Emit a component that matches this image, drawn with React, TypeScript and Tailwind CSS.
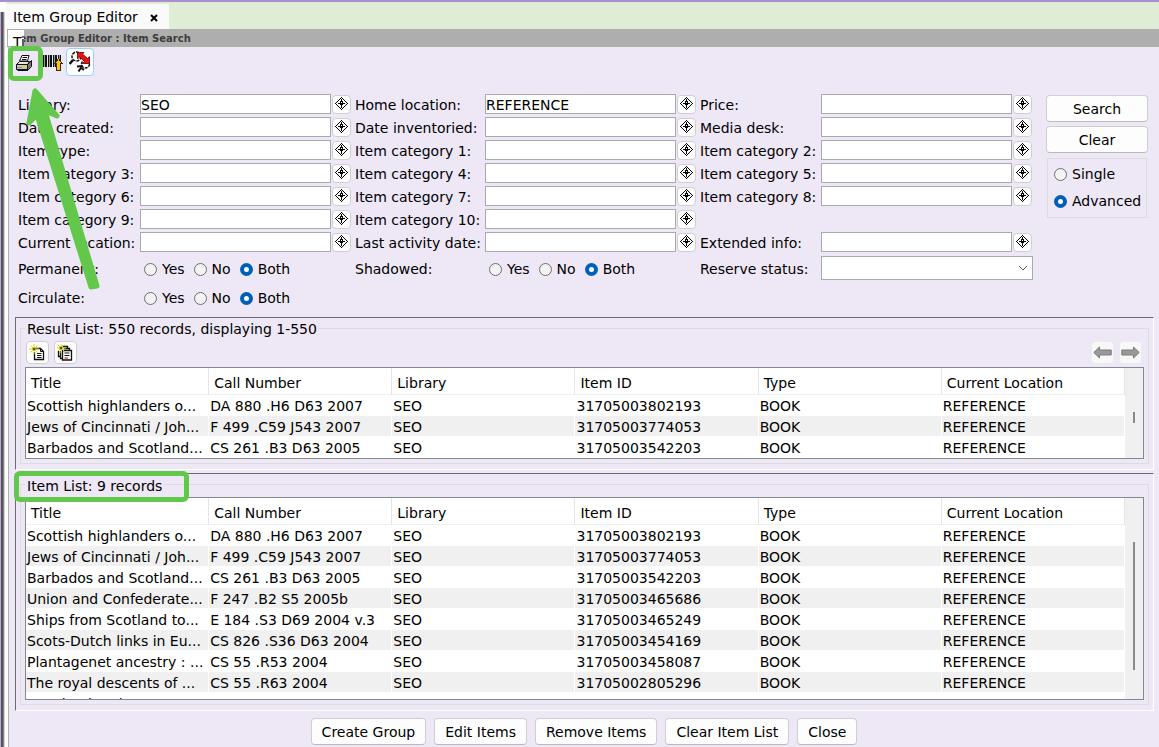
import React from 'react'

const columns = ['Title', 'Call Number', 'Library', 'Item ID', 'Type', 'Current Location']

const records = [
  ['Scottish highlanders o...', 'DA 880 .H6 D63 2007', 'SEO', '31705003802193', 'BOOK', 'REFERENCE'],
  ['Jews of Cincinnati / Joh...', 'F 499 .C59 J543 2007', 'SEO', '31705003774053', 'BOOK', 'REFERENCE'],
  ['Barbados and Scotland...', 'CS 261 .B3 D63 2005', 'SEO', '31705003542203', 'BOOK', 'REFERENCE'],
  ['Union and Confederate...', 'F 247 .B2 S5 2005b', 'SEO', '31705003465686', 'BOOK', 'REFERENCE'],
  ['Ships from Scotland to...', 'E 184 .S3 D69 2004 v.3', 'SEO', '31705003465249', 'BOOK', 'REFERENCE'],
  ['Scots-Dutch links in Eu...', 'CS 826 .S36 D63 2004', 'SEO', '31705003454169', 'BOOK', 'REFERENCE'],
  ['Plantagenet ancestry : ...', 'CS 55 .R53 2004', 'SEO', '31705003458087', 'BOOK', 'REFERENCE'],
  ['The royal descents of ...', 'CS 55 .R63 2004', 'SEO', '31705002805296', 'BOOK', 'REFERENCE'],
  ['Maryland and ...', '', '', '', '', ''],
]

// null keeps a grid slot empty
const fields: ({ label: string; value?: string } | null)[] = [
  { label: 'Library:', value: 'SEO' },
  { label: 'Home location:', value: 'REFERENCE' },
  { label: 'Price:' },
  { label: 'Date created:' },
  { label: 'Date inventoried:' },
  { label: 'Media desk:' },
  { label: 'Item type:' },
  { label: 'Item category 1:' },
  { label: 'Item category 2:' },
  { label: 'Item category 3:' },
  { label: 'Item category 4:' },
  { label: 'Item category 5:' },
  { label: 'Item category 6:' },
  { label: 'Item category 7:' },
  { label: 'Item category 8:' },
  { label: 'Item category 9:' },
  { label: 'Item category 10:' },
  null,
  { label: 'Current location:' },
  { label: 'Last activity date:' },
  { label: 'Extended info:' },
]

const actions = ['Create Group', 'Edit Items', 'Remove Items', 'Clear Item List', 'Close']

const slug = (label: string) => label.toLowerCase().replace(/[^a-z0-9]+/g, '-')

const diamond: [number, number][] = []
for (let y = -6; y <= 6; y++) {
  for (let x = -6; x <= 6; x++) {
    const ring = Math.abs(x) + Math.abs(y) === 6
    const cross = (x === 0 && Math.abs(y) < 5) || (y === 0 && Math.abs(x) < 4)
    const corner = Math.abs(x) === 1 && (Math.abs(y) === 1 || y === -2)
    if (ring || cross || corner) diamond.push([x + 6, y + 6])
  }
}

const GadgetIcon: React.FC = () => (
  <svg width="13" height="13" viewBox="0 0 13 13" shapeRendering="crispEdges" aria-hidden="true">
    {diamond.map(([x, y]) => (
      <rect key={`${x}-${y}`} x={x} y={y} width="1" height="1" fill="#000" />
    ))}
    <rect x="6" y="5" width="1" height="1" fill="#fff" />
  </svg>
)

const PrinterIcon: React.FC = () => (
  <svg width="18" height="18" viewBox="0 0 18 18" aria-hidden="true">
    <path d="M4.5 7 L7 1.5 H14 L12.5 7 Z" fill="#fff" stroke="#111" />
    <path d="M7.5 3.5 H12 M7 5.5 H11.5" stroke="#111" fill="none" />
    <path d="M1.5 10.5 L4.5 7.5 H14.5 L12.5 10.5 Z" fill="#e8e8e8" stroke="#111" />
    <path d="M12.5 10.5 L16.5 6.5 V12.5 L12.5 16.5 Z" fill="#777" stroke="#111" />
    <path d="M1.5 10.5 H12.5 V15.5 H1.5 Z" fill="#c8c8c8" stroke="#111" />
    <path d="M2.5 16.5 H12.5" stroke="#111" />
    <path d="M7.5 12.5 H10.5" stroke="#e8d800" strokeWidth="2" />
    <path d="M2 13.5 H7" stroke="#888" />
  </svg>
)

const BarcodeIcon: React.FC = () => (
  <svg width="20" height="18" viewBox="0 0 20 18" shapeRendering="crispEdges" aria-hidden="true">
    <path d="M0 1h1v12h-1z M2 1h2v12h-2z M5 1h1v12h-1z M7 1h2v12h-2z M10 1h1v12h-1z M12 1h2v12h-2z M15 1h1v12h-1z M17 1h1v12h-1z" fill="#111" />
    <path d="M1 1h1v12h-1z M6 1h1v12h-1z M11 1h1v12h-1z M16 1h1v12h-1z" fill="#999" />
    <path d="M15.5 4.5 L19 9.5 H17.5 V16.5 H13.5 V9.5 H12 Z" fill="#f5c518" stroke="#3a2a00" />
  </svg>
)

const SearchToggleIcon: React.FC = () => (
  <svg width="22" height="22" viewBox="0 0 22 22" aria-hidden="true">
    <circle cx="7.5" cy="5.5" r="4.5" fill="#fff" stroke="#111" strokeWidth="1.5" strokeDasharray="3 1" />
    <path d="M4 9 L0.5 13" stroke="#111" strokeWidth="2.5" />
    <circle cx="16.5" cy="13" r="4" fill="#fff" stroke="#111" strokeWidth="1.5" strokeDasharray="3 1" />
    <path d="M13.5 15 L8 15.5 M12.5 16 L9.5 20.5 M12 17 L15 19" stroke="#111" strokeWidth="2" />
    <path d="M8.5 1.5 H15 L13.5 3 L18.5 7.5 L20.5 5.5 V12.5 H13.5 L15.5 10.5 L10.5 6 L8.5 8 Z" fill="#f01010" stroke="#500" strokeWidth="0.8" />
  </svg>
)

const Sparkle: React.FC = () => (
  <>
    <path d="M5 0v10 M0 5h10 M1.5 1.5l7 7 M8.5 1.5l-7 7" stroke="#e6dc00" strokeWidth="1" />
    <path d="M3.5 5h3 M5 3.5v3" stroke="#333" strokeWidth="1" />
  </>
)

const AddRecordIcon: React.FC = () => (
  <svg width="17" height="17" viewBox="0 0 17 17" fill="none" aria-hidden="true">
    <path d="M6.5 4.5 H11.5 L14.5 7.5 V15.5 H5.5 V8" fill="#fff" stroke="#111" strokeWidth="1.3" />
    <path d="M11.5 4.5 V7.5 H14.5 M8 9.5 H12.5 M8 11.5 H12.5 M8 13.5 H12.5" stroke="#111" />
    <Sparkle />
  </svg>
)

const AddAllIcon: React.FC = () => (
  <svg width="17" height="17" viewBox="0 0 17 17" fill="none" aria-hidden="true">
    <path d="M1.5 7 V12.5 H3 M5 2.5 H10.5 V4" stroke="#111" strokeWidth="1.3" />
    <path d="M3.5 7 V14.5 H5 M7 4.5 H12.5 V6" stroke="#111" strokeWidth="1.3" />
    <path d="M5.5 6.5 H14.5 V16 H5.5 Z" fill="#fff" stroke="#111" strokeWidth="1.3" />
    <path d="M7.5 9 H12.5 M7.5 11.5 H12.5" stroke="#111" />
    <path d="M7.5 14 H11" stroke="#a00" />
    <g transform="translate(-1 -1)">
      <Sparkle />
    </g>
  </svg>
)

const ArrowIcon: React.FC<{ back?: boolean }> = ({ back }) => (
  <svg width="19" height="14" viewBox="0 0 19 14" aria-hidden="true">
    <path
      d={back ? 'M0.8 6.5 L6.5 1 V4 H18.2 V9 H6.5 V12 Z' : 'M18.2 6.5 L12.5 1 V4 H0.8 V9 H12.5 V12 Z'}
      fill="#999"
      stroke="#7c7c7c"
    />
  </svg>
)

const Radio: React.FC<{ name: string; label: string; checked?: boolean }> = ({ name, label, checked }) => (
  <label className="flex items-center gap-[5px]">
    <input
      type="radio"
      name={name}
      defaultChecked={checked}
      className="size-[13px] shrink-0 appearance-none rounded-full border border-[#6e6e6e] bg-[#f3f3f3] checked:border-4 checked:border-[#005fb8] checked:bg-white"
    />
    {label}
  </label>
)

const YesNoBoth: React.FC<{ label: string }> = ({ label }) => (
  <>
    <span className="leading-[28px]">{label}</span>
    <div role="radiogroup" aria-label={label} className="flex h-[28px] items-center gap-[9px] pl-1">
      <Radio name={slug(label)} label="Yes" />
      <Radio name={slug(label)} label="No" />
      <Radio name={slug(label)} label="Both" checked />
    </div>
  </>
)

const PushButton: React.FC<{ children: React.ReactNode }> = ({ children }) => (
  <button
    type="button"
    className="h-[27px] rounded border border-[#cfcfcf] border-b-[#bababa] bg-[#fdfdfd] px-[10px] pt-px leading-[25px] whitespace-nowrap"
  >
    {children}
  </button>
)

const IconButton: React.FC<{ label: string; disabled?: boolean; children: React.ReactNode }> = ({ label, disabled, children }) => (
  <button
    type="button"
    aria-label={label}
    disabled={disabled}
    className="flex size-[23px] items-center justify-center rounded border border-[#cfcfcf] bg-[#fdfdfd] disabled:border-[#ececec] disabled:bg-[#f8f8f8]"
  >
    {children}
  </button>
)

const RecordTable: React.FC<{ rows: string[][]; thumb: React.ReactNode }> = ({ rows, thumb }) => (
  <div className="flex min-h-0 flex-1 overflow-hidden border border-[#828790] bg-white">
    <table className="w-full table-fixed border-separate border-spacing-0 self-start">
      <thead>
        <tr>
          {columns.map((column) => (
            <th
              key={column}
              scope="col"
              className="h-[27px] border-r border-b border-r-[#e5e5e5] border-b-[#f0f0f0] pt-[4px] pl-[5px] text-left leading-[22px] font-normal whitespace-nowrap"
            >
              {column}
            </th>
          ))}
        </tr>
      </thead>
      <tbody>
        {rows.map((row, index) => (
          <tr key={index} className="even:bg-[#f0f0f0]">
            {row.map((cell, i) => (
              <td key={i} className="h-[21px] overflow-hidden border-r border-b border-white pt-[2px] pl-px leading-[18px] whitespace-nowrap">
                {cell}
              </td>
            ))}
          </tr>
        ))}
      </tbody>
    </table>
    <div className="flex w-[18px] shrink-0 flex-col items-center bg-[#f0f0f0]">{thumb}</div>
  </div>
)

const App: React.FC = () => {
  return (
    <div className="flex h-screen min-h-[640px] flex-col overflow-hidden border-t-2 border-[#a98fd0] bg-white font-['Verdana','DejaVu_Sans',sans-serif] text-[14px] text-black">
      <div className="flex min-h-0 flex-1">
        {/* window edge */}
        <div className="mt-[10px] flex w-[6px] shrink-0">
          <div className="w-px bg-[#bda6e0]" />
          <div className="w-[2px] bg-[#555]" />
          <div className="w-px bg-[#858585]" />
          <div className="w-px bg-[#cfd3cf]" />
        </div>

        <div className="flex min-w-0 flex-1 flex-col">
          <div className="flex h-[27px] shrink-0 items-end bg-[#dfecd6]">
            <div className="flex h-[25px] w-[163px] items-center gap-[12px] bg-[#fafafa] pt-[2px] pl-[7px]">
              <span className="whitespace-nowrap">Item Group Editor</span>
              <button type="button" aria-label="Close tab">
                <svg width="8" height="8" viewBox="0 0 8 8" aria-hidden="true">
                  <path d="M1 1 L7 7 M7 1 L1 7" stroke="#000" strokeWidth="2" />
                </svg>
              </button>
            </div>
          </div>

          <div className="relative ml-px h-[18px] shrink-0 bg-[#aeaeae] pl-1">
            <h1 className="text-[10px] leading-[19px] font-bold text-[#3c3c3c]">Item Group Editor : Item Search</h1>
            <div className="absolute top-px left-px h-[16px] w-[16px] overflow-hidden bg-white pl-[5px] leading-[25px]">Ti</div>
          </div>

          <div className="relative ml-[2px] flex min-h-0 flex-1 flex-col border-l border-[#b0b0b0] bg-[#eee8f6]">
            <div className="flex h-[47px] shrink-0 items-start">
              <button type="button" aria-label="Print" className="relative flex h-[33px] w-[33px] items-center justify-center pr-[3px] pb-[2px]">
                <PrinterIcon />
                <span className="absolute -inset-px rounded-md border-[5px] border-[#62c74a]" />
              </button>
              <button type="button" aria-label="Barcode" className="mt-[7px] ml-px">
                <BarcodeIcon />
              </button>
              <button
                type="button"
                aria-label="Item search"
                className="mt-px ml-[3px] flex size-[28px] items-center justify-center rounded-sm border border-[#99cfff] bg-white"
              >
                <SearchToggleIcon />
              </button>
            </div>

            <form className="flex shrink-0 gap-[10px] pr-[11px] pl-[9px]">
              <div className="grid min-w-0 flex-1 grid-cols-[122px_minmax(0,1fr)_130px_minmax(0,1fr)_121px_minmax(0,1fr)] whitespace-nowrap">
                {fields.map((field, index) =>
                  field ? (
                    <React.Fragment key={field.label}>
                      <label htmlFor={slug(field.label)} className="h-[23px] leading-[22px]">
                        {field.label}
                      </label>
                      <div className="flex h-[23px] items-start gap-px pr-1">
                        <input
                          id={slug(field.label)}
                          type="text"
                          defaultValue={field.value}
                          className="h-[20px] min-w-0 flex-1 border border-[#a9aab0] bg-white pt-[2px] outline-none"
                        />
                        <button
                          type="button"
                          aria-label={`Choose ${field.label}`}
                          className="mt-px flex size-[19px] shrink-0 items-start justify-center rounded border border-[#cfcfcf] bg-[#fdfdfd] pt-px"
                        >
                          <GadgetIcon />
                        </button>
                      </div>
                    </React.Fragment>
                  ) : (
                    <div key={index} className="col-span-2" />
                  )
                )}

                <YesNoBoth label="Permanent:" />
                <YesNoBoth label="Shadowed:" />
                <label htmlFor="reserve-status" className="leading-[28px]">
                  Reserve status:
                </label>
                <div className="relative h-[29px] pt-px pr-[3px]">
                  <select id="reserve-status" className="h-[24px] w-full appearance-none border border-[#a9aab0] bg-white">
                    <option value=""></option>
                  </select>
                  <svg className="pointer-events-none absolute top-[10px] right-[8px]" width="10" height="6" viewBox="0 0 10 6" fill="none">
                    <path d="M1 1 L5 5 L9 1" stroke="#555" />
                  </svg>
                </div>
                <YesNoBoth label="Circulate:" />
                <div className="col-span-4 h-[29px]" />
              </div>

              <div className="flex w-[102px] shrink-0 flex-col gap-1 pt-px">
                <PushButton>Search</PushButton>
                <PushButton>Clear</PushButton>
                <div role="radiogroup" aria-label="Search mode" className="mx-px mt-px flex h-[60px] flex-col justify-center gap-[6px] border border-[#dcdcdc] pl-[6px] leading-[21px]">
                  <Radio name="mode" label="Single" />
                  <Radio name="mode" label="Advanced" checked />
                </div>
              </div>
            </form>

            <section className="mt-1 mr-[5px] ml-[6px] flex shrink-0 flex-col border border-t-[#6c6c70] border-r-white border-b-white border-l-[#6c6c70] pr-1 pb-[5px] pl-1">
              <fieldset className="flex min-w-0 flex-col border border-[#dcdcdc] px-1 pb-1">
                <legend className="px-[2px] pt-[2px] leading-[18px]">Result List: 550 records, displaying 1-550</legend>
                <div className="flex gap-[5px] py-[3px] pr-[2px] pl-px">
                  <IconButton label="Add record">
                    <AddRecordIcon />
                  </IconButton>
                  <IconButton label="Add all records">
                    <AddAllIcon />
                  </IconButton>
                  <div className="flex-1" />
                  <IconButton label="Previous" disabled>
                    <ArrowIcon back />
                  </IconButton>
                  <IconButton label="Next" disabled>
                    <ArrowIcon />
                  </IconButton>
                </div>
                <RecordTable rows={records.slice(0, 3)} thumb={<div className="mt-[44px] h-[11px] w-[2px] bg-[#8a8a8a]" />} />
              </fieldset>
            </section>

            <section className="relative mt-[3px] mr-[5px] ml-[6px] flex min-h-0 flex-1 flex-col border border-t-[#6c6c70] border-r-white border-b-white border-l-[#6c6c70] pr-1 pb-[5px] pl-1">
              <fieldset className="flex min-h-0 min-w-0 flex-1 flex-col border border-[#dcdcdc] px-1 pt-[3px] pb-1">
                <legend className="px-[2px] pt-[4px] leading-[16px]">Item List: 9 records</legend>
                <RecordTable rows={records} thumb={<div className="mt-[44px] h-[128px] w-[2px] bg-[#8a8a8a]" />} />
              </fieldset>
              <div className="absolute -top-[3px] -left-[2px] h-[31px] w-[175px] rounded-md border-[5px] border-[#62c74a]" />
            </section>

            <div className="flex shrink-0 justify-center gap-2 pt-[7px] pb-[2px]">
              {actions.map((action) => (
                <PushButton key={action}>{action}</PushButton>
              ))}
            </div>

            {/* callout arrow pointing at the print button */}
            <svg className="pointer-events-none absolute top-[38px] left-[11px]" width="84" height="212" viewBox="0 0 84 212" aria-hidden="true">
              <path d="M15 6 L9 38 L17 30 L71 202 L77 201 L25 26 L37 31 Z" fill="#62c74a" stroke="#62c74a" strokeWidth="5" strokeLinejoin="round" />
            </svg>
          </div>
        </div>
      </div>
    </div>
  )
}

export default App
